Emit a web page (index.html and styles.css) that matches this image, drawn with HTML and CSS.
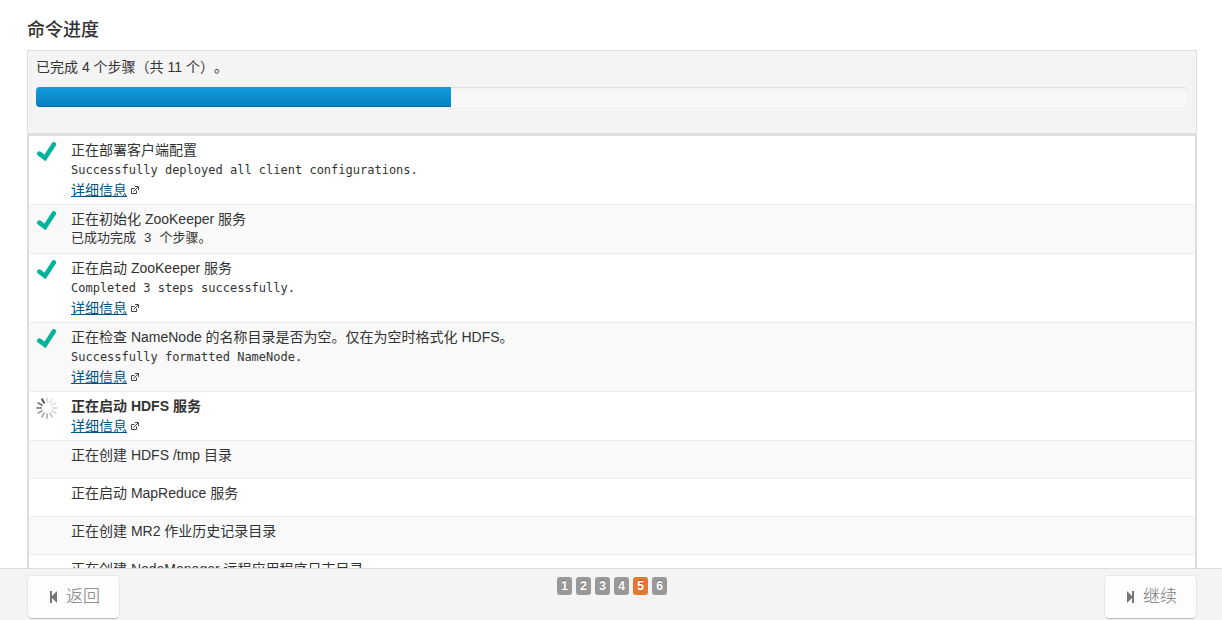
FILE: index.html
```html
<!DOCTYPE html>
<html lang="zh-CN">
<head>
  <meta charset="UTF-8">
  <title>命令进度</title>
  <meta name="viewport" content="width=device-width, initial-scale=1">
  <link rel="stylesheet" href="styles.css">
</head>
<body>
  <!-- Shared icons -->
  <svg class="icon-defs" aria-hidden="true">
    <symbol id="icon-check" viewBox="0 0 20 20">
      <path d="M2.4 11.6 L8 16 L16.8 2.4" fill="none" stroke="#00b39a" stroke-width="4.6" stroke-linecap="round" stroke-linejoin="miter"/>
    </symbol>
    <symbol id="icon-external" viewBox="0 0 8 8">
      <path d="M3.5 2.5 H0.5 V7.5 H5.5 V4.5 M2.5 5.5 L7 1 M4 0.5 H7.5 V4" fill="none" stroke="#444" stroke-width="1"/>
    </symbol>
  </svg>

  <main class="container">
    <h1 class="title">命令进度</h1>

    <section class="panel">
      <div class="panel-header">
        <p class="summary">已完成 4 个步骤（共 11 个）。</p>
        <div class="progress" role="progressbar" aria-label="命令进度" aria-valuemin="0" aria-valuemax="100" aria-valuenow="36">
          <div class="bar" style="width: 36%"></div>
        </div>
      </div>

      <ol class="steps">
        <li class="step">
          <div class="step-icon"><svg class="check"><use href="#icon-check"/></svg></div>
          <div class="step-body">
            <p>正在部署客户端配置</p>
            <p class="message">Successfully deployed all client configurations.</p>
            <p><a href="#">详细信息</a><svg class="external"><use href="#icon-external"/></svg></p>
          </div>
        </li>
        <li class="step">
          <div class="step-icon"><svg class="check"><use href="#icon-check"/></svg></div>
          <div class="step-body">
            <p>正在初始化 ZooKeeper 服务</p>
            <p class="message message-zh">已成功完成 3 个步骤。</p>
          </div>
        </li>
        <li class="step">
          <div class="step-icon"><svg class="check"><use href="#icon-check"/></svg></div>
          <div class="step-body">
            <p>正在启动 ZooKeeper 服务</p>
            <p class="message">Completed 3 steps successfully.</p>
            <p><a href="#">详细信息</a><svg class="external"><use href="#icon-external"/></svg></p>
          </div>
        </li>
        <li class="step">
          <div class="step-icon"><svg class="check"><use href="#icon-check"/></svg></div>
          <div class="step-body">
            <p>正在检查 NameNode 的名称目录是否为空。仅在为空时格式化 HDFS。</p>
            <p class="message">Successfully formatted NameNode.</p>
            <p><a href="#">详细信息</a><svg class="external"><use href="#icon-external"/></svg></p>
          </div>
        </li>
        <li class="step">
          <div class="step-icon">
            <svg class="spinner" viewBox="-12 -12 24 24" stroke-width="2" stroke-linecap="round">
              <path d="M0 -6 V-10" stroke="#e4e4e4"/>
              <path d="M0 -6 V-10" stroke="#e4e4e4" transform="rotate(30)"/>
              <path d="M0 -6 V-10" stroke="#e2e2e2" transform="rotate(60)"/>
              <path d="M0 -6 V-10" stroke="#dedede" transform="rotate(90)"/>
              <path d="M0 -6 V-10" stroke="#d8d8d8" transform="rotate(120)"/>
              <path d="M0 -6 V-10" stroke="#cccccc" transform="rotate(150)"/>
              <path d="M0 -6 V-10" stroke="#bdbdbd" transform="rotate(180)"/>
              <path d="M0 -6 V-10" stroke="#b0b0b0" transform="rotate(210)"/>
              <path d="M0 -6 V-10" stroke="#a0a0a0" transform="rotate(240)"/>
              <path d="M0 -6 V-10" stroke="#909090" transform="rotate(270)"/>
              <path d="M0 -6 V-10" stroke="#757575" transform="rotate(300)"/>
              <path d="M0 -6 V-10" stroke="#555555" transform="rotate(330)"/>
            </svg>
          </div>
          <div class="step-body">
            <p class="current">正在启动 HDFS 服务</p>
            <p><a href="#">详细信息</a><svg class="external"><use href="#icon-external"/></svg></p>
          </div>
        </li>
        <li class="step">
          <div class="step-icon"></div>
          <div class="step-body"><p>正在创建 HDFS /tmp 目录</p></div>
        </li>
        <li class="step">
          <div class="step-icon"></div>
          <div class="step-body"><p>正在启动 MapReduce 服务</p></div>
        </li>
        <li class="step">
          <div class="step-icon"></div>
          <div class="step-body"><p>正在创建 MR2 作业历史记录目录</p></div>
        </li>
        <li class="step">
          <div class="step-icon"></div>
          <div class="step-body"><p>正在创建 NodeManager 远程应用程序日志目录</p></div>
        </li>
      </ol>
    </section>
  </main>

  <footer class="footer">
    <button type="button" class="btn">
      <svg class="btn-icon" viewBox="0 0 8 12"><path d="M0 0 H2 V5 L6 1 L7 0 V12 L6 11 L2 7 V12 H0 Z" fill="#777"/></svg>
      返回
    </button>
    <ol class="pager">
      <li>1</li>
      <li>2</li>
      <li>3</li>
      <li>4</li>
      <li class="active" aria-current="step">5</li>
      <li>6</li>
    </ol>
    <button type="button" class="btn">
      <svg class="btn-icon" viewBox="0 0 8 12"><path d="M7 0 H5 V5 L1 1 L0 0 V12 L1 11 L5 7 V12 H7 Z" fill="#777"/></svg>
      继续
    </button>
  </footer>
</body>
</html>
```
FILE: styles.css
```css
* {
  box-sizing: border-box;
}
body {
  margin: 0;
  background: #fff;
  color: #333;
  font-family: "Liberation Sans", "Noto Sans CJK SC", sans-serif;
  font-size: 14px;
  line-height: 20px;
  text-spacing-trim: space-all;
}
p, ol {
  margin: 0;
  padding: 0;
  list-style: none;
}
a {
  color: #005580;
  text-decoration: underline;
}
.icon-defs {
  position: absolute;
  width: 0;
  height: 0;
}
.container {
  padding: 20px 25px 0 27px;
}
.title {
  margin: 0 0 10px;
  font-size: 18px;
  font-weight: 500;
  line-height: 20px;
}

/* Panel */
.panel {
  border: 1px solid #ddd;
}
.panel-header {
  padding: 6px 8px 26px;
  background: #f4f4f4;
}
.summary {
  margin-bottom: 10px;
}
.progress {
  height: 20px;
  overflow: hidden;
  border-radius: 4px;
  background: linear-gradient(#f5f5f5, #f9f9f9);
  box-shadow: inset 0 1px 2px rgba(0, 0, 0, 0.1);
}
.bar {
  height: 100%;
  background: linear-gradient(#149bdf, #0480be);
  box-shadow: inset 0 -1px 0 rgba(0, 0, 0, 0.15);
}

/* Steps */
.steps {
  border: 1px solid #ddd;
  border-top-width: 3px;
}
.step {
  display: flex;
  min-height: 38px;
  padding: 4px 8px;
  border-bottom: 1px solid #ececec;
}
.step:nth-child(even) {
  background: #f9f9f9;
}
.step-icon {
  flex: none;
  width: 34px;
}
.check {
  display: block;
  width: 20px;
  height: 20px;
  margin-top: 2px;
}
.spinner {
  display: block;
  width: 24px;
  height: 24px;
  margin-left: -2px;
}
.message {
  font-family: "DejaVu Sans Mono", "Noto Sans CJK SC", monospace;
  font-size: 12px;
}
.message-zh {
  font-family: "Liberation Mono", "Noto Sans CJK SC", monospace;
  font-size: 13px;
}
.current {
  font-weight: bold;
}
.external {
  width: 8px;
  height: 8px;
  margin-left: 4px;
  vertical-align: 1px;
}

/* Footer */
.footer {
  position: fixed;
  right: 0;
  bottom: 0;
  left: 0;
  display: flex;
  justify-content: space-between;
  align-items: flex-start;
  padding: 6px 25px 1px 27px;
  border-top: 1px solid #ddd;
  background: #f4f4f4;
}
.btn {
  display: flex;
  align-items: center;
  gap: 8px;
  padding: 10px 19px 10px 22px;
  border: 1px solid #e6e6e6;
  border-bottom-color: #bbb;
  border-radius: 5px;
  background: #fdfdfd;
  color: #777;
  font-family: "Liberation Sans", "Noto Sans CJK SC", sans-serif;
  font-size: 17px;
  font-weight: 300;
  line-height: 22px;
  cursor: pointer;
}
.btn-icon {
  width: 8px;
  height: 12px;
}
.pager {
  display: flex;
  gap: 4px;
  padding-top: 2px;
}
.pager li {
  min-width: 15px;
  padding: 2px 4px;
  border-radius: 3px;
  background: #999;
  color: #fff;
  font-size: 12px;
  font-weight: bold;
  line-height: 14px;
  text-align: center;
  text-shadow: 0 -1px 0 rgba(0, 0, 0, 0.25);
}
.pager .active {
  background: #e67730;
}
```
